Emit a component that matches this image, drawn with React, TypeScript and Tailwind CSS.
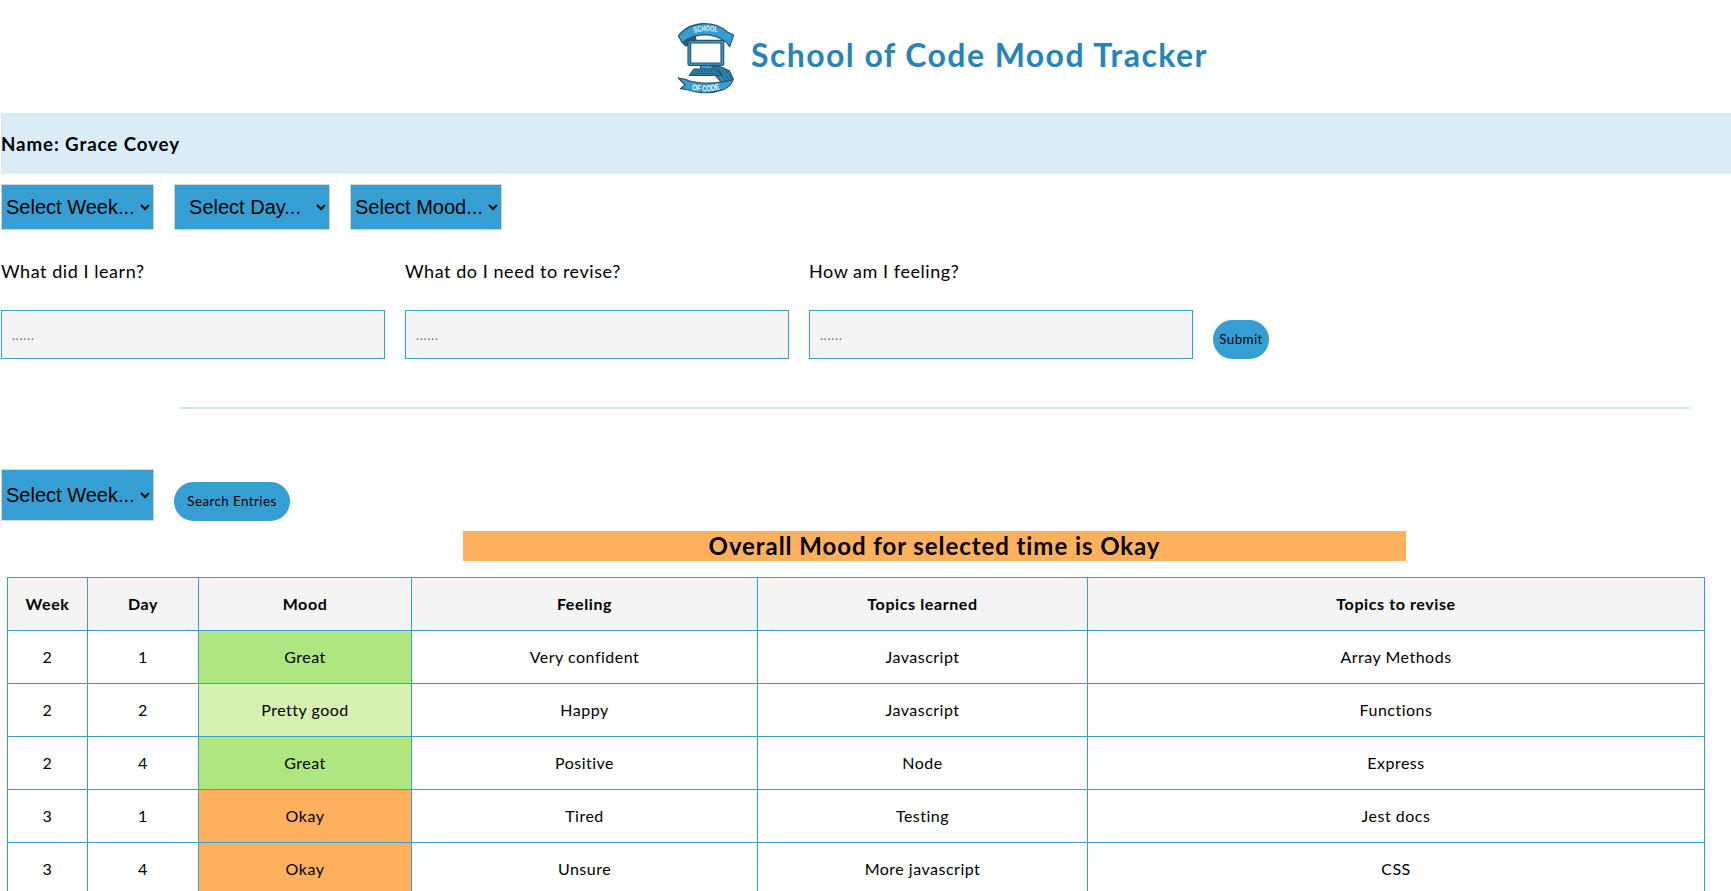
import React from "react";

type Entry = {
  week: number;
  day: number;
  mood: string;
  feeling: string;
  learned: string;
  revise: string;
};

const entries: Entry[] = [
  { week: 2, day: 1, mood: "Great", feeling: "Very confident", learned: "Javascript", revise: "Array Methods" },
  { week: 2, day: 2, mood: "Pretty good", feeling: "Happy", learned: "Javascript", revise: "Functions" },
  { week: 2, day: 4, mood: "Great", feeling: "Positive", learned: "Node", revise: "Express" },
  { week: 3, day: 1, mood: "Okay", feeling: "Tired", learned: "Testing", revise: "Jest docs" },
  { week: 3, day: 4, mood: "Okay", feeling: "Unsure", learned: "More javascript", revise: "CSS" },
];

const moodColours: Record<string, string> = {
  Great: "bg-[#aee67f]",
  "Pretty good": "bg-[#d6f0b2]",
  Okay: "bg-[#ffb05c]",
};

function Logo() {
  return (
    <svg className="h-[95px] w-[90px] shrink-0" viewBox="0 0 270 285">
      <defs>
        <path id="top-curve" d="M101 70 Q137 58 178 68" />
        <path id="bottom-curve" d="M92 238 Q136 252 186 236" />
      </defs>
      <g stroke="#2f5263" strokeWidth="3.5" strokeLinejoin="round">
        {/* folded ribbon ends behind the computer */}
        <path d="M67 97 L76 107 L88 107 L108 92 L106 80 Z" fill="#24668b" />
        <path d="M160 166 L186 172 L208 182 L220 207 L190 224 L166 196 Z" fill="#2b86b6" />
        {/* upper ribbon */}
        <path d="M55 78 Q82 42 132 41 Q174 41 202 66 L221 75 L209 110 L198 96 Q168 74 133 74 Q96 76 67 98 Z" fill="#359fd4" />
        {/* lower ribbon */}
        <path d="M55 204 L76 208 Q94 218 131 219 Q178 221 220 208 Q212 230 190 239 Q160 250 126 248 Q102 246 87 240 L61 236 L75 225 Z" fill="#359fd4" />
        {/* monitor and keyboard */}
        <path d="M122 163 H157 V180 H122 Z" fill="#359fd4" />
        <rect x="84" y="91" width="107" height="75" rx="4" fill="#359fd4" />
        <rect x="92" y="99" width="91" height="60" fill="#fefefe" />
        <path d="M102 177 H174 L187 196 H88 Z" fill="#2b86b6" />
      </g>
      <path d="M105 183 H174 M100 190 H179" stroke="#1d4b64" strokeWidth="3" strokeDasharray="6 3" />
      <path
        d="M74 98 L84 104 M82 93 L93 100 M90 88 L101 94 M184 178 L207 208 M175 182 L198 213 M194 178 L214 204"
        stroke="#1d4b64"
        strokeWidth="2"
      />
      <g fill="#e6f5fd" fontFamily="Liberation Sans, sans-serif" fontWeight="bold">
        <text fontSize="25" textLength="70" lengthAdjust="spacingAndGlyphs">
          <textPath href="#top-curve" startOffset="2" textLength="70" lengthAdjust="spacingAndGlyphs">SCHOOL</textPath>
        </text>
        <text fontSize="26" textLength="86" lengthAdjust="spacingAndGlyphs">
          <textPath href="#bottom-curve" startOffset="3" textLength="86" lengthAdjust="spacingAndGlyphs">OF CODE</textPath>
        </text>
      </g>
    </svg>
  );
}

const selectBase = "border border-[#d3d3d3] bg-[#359fd4] text-[20px] font-['Liberation_Sans',sans-serif] text-black";
const inputBase =
  "h-[49px] w-[384px] border border-[#359fd4] bg-[#f4f4f4] px-2.5 text-[13.333px] tracking-[0.6px] placeholder:text-[#757575]";
const buttonBase = "h-[39px] rounded-[20px] bg-[#359fd4] text-[13.333px] text-black";
const cell = "border border-[#359fd4] p-0 text-center";

function Field({ label }: { label: string }) {
  return (
    <label className="flex w-[384px] flex-col gap-[27px]">
      <span className="h-6 text-[18px] leading-6 tracking-[0.55px]">{label}</span>
      <input className={inputBase} placeholder="......" />
    </label>
  );
}

export default function App() {
  return (
    <div className="h-[891px] w-full overflow-hidden bg-white pl-px font-[Lato,sans-serif] text-black">
      <header className="flex h-[113px] items-start pt-2.5 pl-[659px]">
        <Logo />
        <h1 className="ml-px mt-[21px] text-[32px] leading-[48px] font-bold tracking-[1.42px] whitespace-nowrap text-[#2784b6]">
          School of Code Mood Tracker
        </h1>
      </header>

      <div className="flex h-[61px] items-center bg-[#daecf6]">
        <h3 className="pt-0.5 text-[18.72px] font-bold tracking-[0.9px]">Name: Grace Covey</h3>
      </div>

      <div className="mt-2.5 flex h-[46px] gap-5">
        <select className={`${selectBase} w-[153px]`}>
          <option>Select Week...</option>
        </select>
        <select className={`${selectBase} w-[156px] pr-0.5 text-center`}>
          <option>Select Day...</option>
        </select>
        <select className={`${selectBase} w-[152px]`}>
          <option>Select Mood...</option>
        </select>
      </div>

      <form className="mt-[29px] flex items-end gap-5">
        <Field label="What did I learn?" />
        <Field label="What do I need to revise?" />
        <Field label="How am I feeling?" />
        <button type="button" className={`${buttonBase} w-14 pt-px tracking-[0.4px]`}>Submit</button>
      </form>

      <hr className="mt-12 ml-[178px] h-0.5 w-[1511px] border-0 bg-[#d3e6f0]" />

      <div className="mt-[60px] flex h-[52px] items-end gap-5">
        <select className={`${selectBase} h-[52px] w-[153px]`}>
          <option>Select Week...</option>
        </select>
        <button type="button" className={`${buttonBase} w-[116px] tracking-[0.45px]`}>Search Entries</button>
      </div>

      <h2 className="mt-2.5 ml-[462px] h-[30px] w-[943px] bg-[#ffb05c] text-center text-[24px] leading-[29px] font-bold tracking-[0.93px]">
        Overall Mood for selected time is Okay
      </h2>

      <table className="mt-4 ml-1.5 w-[1698px] table-fixed border-collapse text-[16px] tracking-[0.5px] [font-variant-ligatures:none]">
        <colgroup>
          <col className="w-[80px]" />
          <col className="w-[111px]" />
          <col className="w-[213px]" />
          <col className="w-[346px]" />
          <col className="w-[330px]" />
          <col className="w-[617px]" />
        </colgroup>
        <thead>
          <tr className="h-[53px] bg-[#f4f4f4]">
            {["Week", "Day", "Mood", "Feeling", "Topics learned", "Topics to revise"].map((h) => (
              <th key={h} className={`${cell} font-bold tracking-[0.6px]`}>{h}</th>
            ))}
          </tr>
        </thead>
        <tbody>
          {entries.map((e, i) => (
            <tr key={i} className="h-[53px]">
              <td className={cell}>{e.week}</td>
              <td className={cell}>{e.day}</td>
              <td className={`${cell} ${moodColours[e.mood]}`}>{e.mood}</td>
              <td className={cell}>{e.feeling}</td>
              <td className={cell}>{e.learned}</td>
              <td className={cell}>{e.revise}</td>
            </tr>
          ))}
        </tbody>
      </table>
    </div>
  );
}
